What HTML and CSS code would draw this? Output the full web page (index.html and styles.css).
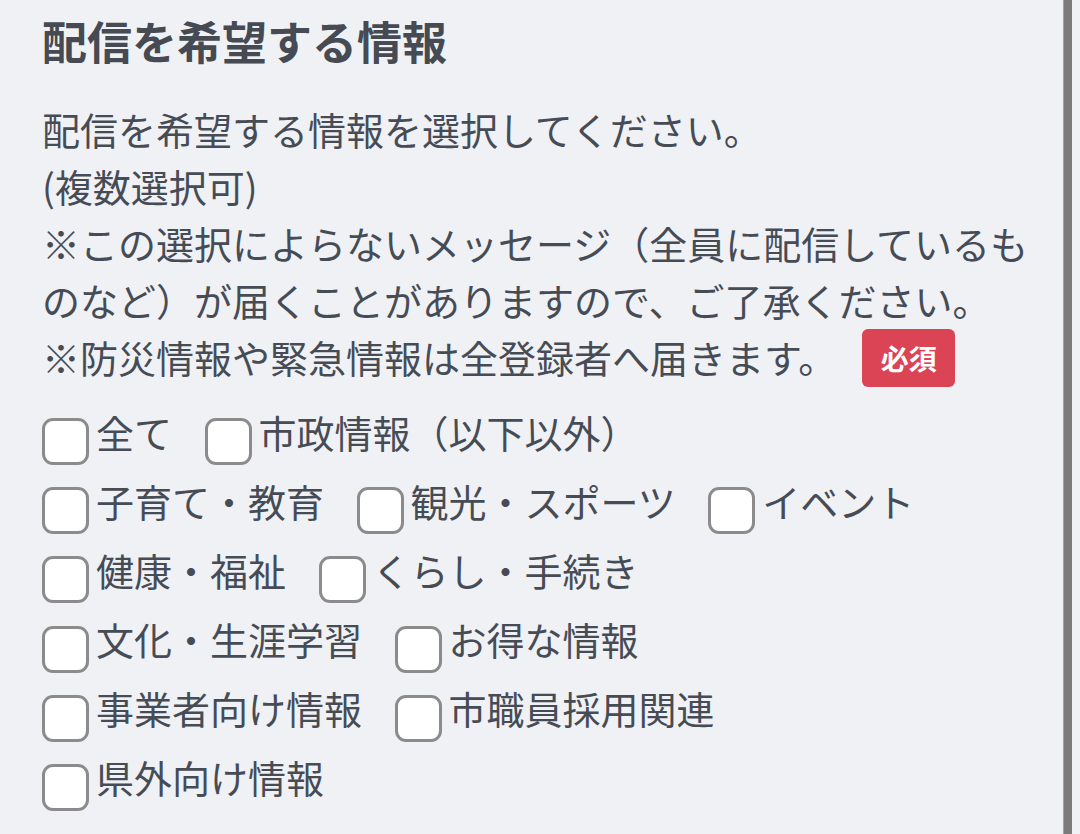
FILE: index.html
```html
<!DOCTYPE html>
<html lang="ja">
<head>
<meta charset="utf-8">
<title>配信を希望する情報</title>
<link rel="stylesheet" href="styles.css">
</head>
<body>
<div class="page">
  <main class="content">
    <h2 class="title">配信を希望する情報</h2>
    <p class="desc">配信を希望する情報を選択してください。<br>(複数選択可)<br>※この選択によらないメッセージ（全員に配信しているものなど）が届くことがありますので、ご了承ください。<br>※防災情報や緊急情報は全登録者へ届きます。<span class="badge">必須</span></p>
    <div class="options">
      <div class="opt-row">
        <label class="opt"><input type="checkbox" class="cb"><span class="lbl">全て</span></label>
        <label class="opt"><input type="checkbox" class="cb"><span class="lbl">市政情報（以下以外）</span></label>
      </div>
      <div class="opt-row">
        <label class="opt"><input type="checkbox" class="cb"><span class="lbl">子育て・教育</span></label>
        <label class="opt"><input type="checkbox" class="cb"><span class="lbl">観光・スポーツ</span></label>
        <label class="opt"><input type="checkbox" class="cb"><span class="lbl">イベント</span></label>
      </div>
      <div class="opt-row">
        <label class="opt"><input type="checkbox" class="cb"><span class="lbl">健康・福祉</span></label>
        <label class="opt"><input type="checkbox" class="cb"><span class="lbl">くらし・手続き</span></label>
      </div>
      <div class="opt-row">
        <label class="opt"><input type="checkbox" class="cb"><span class="lbl">文化・生涯学習</span></label>
        <label class="opt"><input type="checkbox" class="cb"><span class="lbl">お得な情報</span></label>
      </div>
      <div class="opt-row">
        <label class="opt"><input type="checkbox" class="cb"><span class="lbl">事業者向け情報</span></label>
        <label class="opt"><input type="checkbox" class="cb"><span class="lbl">市職員採用関連</span></label>
      </div>
      <div class="opt-row">
        <label class="opt"><input type="checkbox" class="cb"><span class="lbl">県外向け情報</span></label>
      </div>
    </div>
  </main>
  <div class="edge"></div>
</div>
</body>
</html>
```

FILE: styles.css
```css
html, body {
  margin: 0;
  padding: 0;
  background: #f0f1f5;
}
body {
  font-family: "Noto Sans CJK JP", "Noto Sans", sans-serif;
  color: #464c55;
  width: 1080px;
  height: 834px;
  overflow: hidden;
}
.page {
  display: flex;
  height: 834px;
}
.content {
  width: 1063px;
  flex: none;
  padding: 14px 0 0 42px;
  box-sizing: border-box;
}
.edge {
  width: 9px;
  flex: none;
  height: 100%;
  background: #7b7b7b;
  border-left: 1px solid #a3a3a3;
  box-sizing: border-box;
}
.title {
  margin: 0 0 31.5px 0;
  font-size: 45px;
  line-height: 54px;
  font-weight: 700;
  color: #454a53;
}
.desc {
  margin: 0;
  font-size: 38px;
  line-height: 57px;
  width: 1000px;
}
.badge {
  display: inline-block;
  margin-left: 26px;
  width: 93px;
  height: 58px;
  line-height: 58px;
  text-align: center;
  background: #db4455;
  color: #fff;
  font-size: 28px;
  font-weight: 700;
  border-radius: 6px;
  vertical-align: top;
  position: relative;
  top: 1px;
}
.options {
  margin-top: 17px;
  display: flex;
  flex-direction: column;
  row-gap: 6.7px;
}
.opt-row {
  display: flex;
  align-items: flex-start;
}
.opt {
  display: flex;
  align-items: flex-start;
  margin-right: 32.5px;
  font-size: 38px;
  line-height: 57px;
}
.cb {
  appearance: none;
  -webkit-appearance: none;
  margin: 15.5px 7px 0 0;
  width: 47px;
  height: 47px;
  flex: none;
  box-sizing: border-box;
  border: 3.5px solid #8b8b8b;
  border-radius: 11px;
  background: #fff;
}
.lbl {
  white-space: nowrap;
}
```
